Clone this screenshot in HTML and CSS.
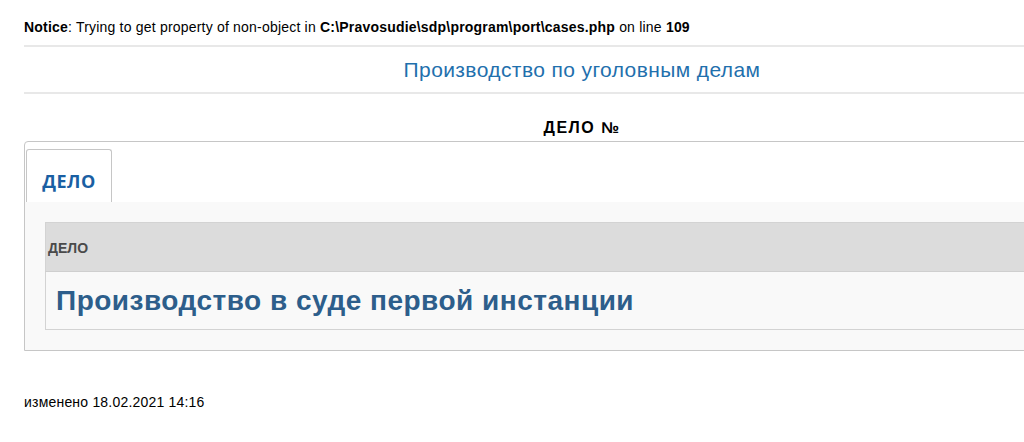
FILE: index.html
```html
<!DOCTYPE html>
<html lang="ru">
<head>
<meta charset="utf-8">
<title>Дело</title>
<link rel="stylesheet" href="styles.css">
</head>
<body>
<div class="page">
  <p class="notice"><b>Notice</b>: Trying to get property of non-object in <b>C:\Pravosudie\sdp\program\port\cases.php</b> on line <b>109</b></p>
  <div class="title-bar">Производство по уголовным делам</div>
  <div class="case-no">ДЕЛО №</div>
  <div class="tabs-box">
    <div class="tabs-nav">
      <div class="tab">ДЕЛО</div>
    </div>
    <div class="tab-panel">
      <table class="case-table">
        <tr class="head-row"><th>ДЕЛО</th></tr>
        <tr class="body-row"><td>Производство в суде первой инстанции</td></tr>
      </table>
    </div>
  </div>
  <p class="changed">изменено 18.02.2021 14:16</p>
</div>
</body>
</html>
```

FILE: styles.css
```css
html, body {
  margin: 0;
  padding: 0;
  overflow: hidden;
  background: #fff;
}
body {
  font-family: "Liberation Sans", Arial, sans-serif;
  color: #000;
}
.page {
  width: 1116px;
  padding-left: 24px;
}
.notice {
  margin: 0;
  padding-top: 19px;
  height: 26px;
  font-size: 14px;
  letter-spacing: 0.2px;
  line-height: 16px;
}
.title-bar {
  border-top: 2px solid #e8e8e8;
  border-bottom: 2px solid #e8e8e8;
  height: 45px;
  line-height: 45px;
  text-align: center;
  font-size: 21px;
  letter-spacing: 0.4px;
  color: #1f70ad;
}
.case-no {
  text-align: center;
  font-weight: bold;
  font-size: 16px;
  letter-spacing: 1.5px;
  line-height: 16px;
  padding-top: 26px;
  height: 21px;
}
.tabs-box {
  border: 1px solid #c6c6c6;
  border-radius: 4px 0 0 0;
  padding-top: 7px;
}
.tabs-nav {
  display: flex;
  padding-left: 1px;
}
.tab {
  box-sizing: border-box;
  width: 86px;
  height: 53px;
  border: 1px solid #c6c6c6;
  border-bottom: 0;
  border-radius: 3px 3px 0 0;
  background: #fff;
  font-family: "Open Sans", "Noto Sans", sans-serif;
  font-weight: bold;
  font-size: 18px;
  letter-spacing: 0.5px;
  color: #1a5fa3;
  display: flex;
  align-items: center;
  justify-content: center;
  padding-top: 10px;
}
.tab-panel {
  background: #f9f9f9;
  padding: 20px;
}
.case-table {
  width: 100%;
  border-collapse: collapse;
  border: 1px solid #d3d3d3;
}
.head-row th {
  background: #dcdcdc;
  text-align: left;
  font-size: 14px;
  font-weight: bold;
  color: #4a4a4a;
  height: 46px;
  padding: 2px 2px 0 2px;
  border-bottom: 1px solid #cfcfcf;
}
.body-row td {
  background: #f9f9f9;
  height: 57px;
  padding: 0 10px;
  font-size: 28px;
  letter-spacing: 0.5px;
  font-weight: bold;
  color: #2d5e8b;
}
.changed {
  margin: 0;
  padding-top: 43px;
  font-size: 14px;
  letter-spacing: 0.2px;
  line-height: 16px;
}
```
